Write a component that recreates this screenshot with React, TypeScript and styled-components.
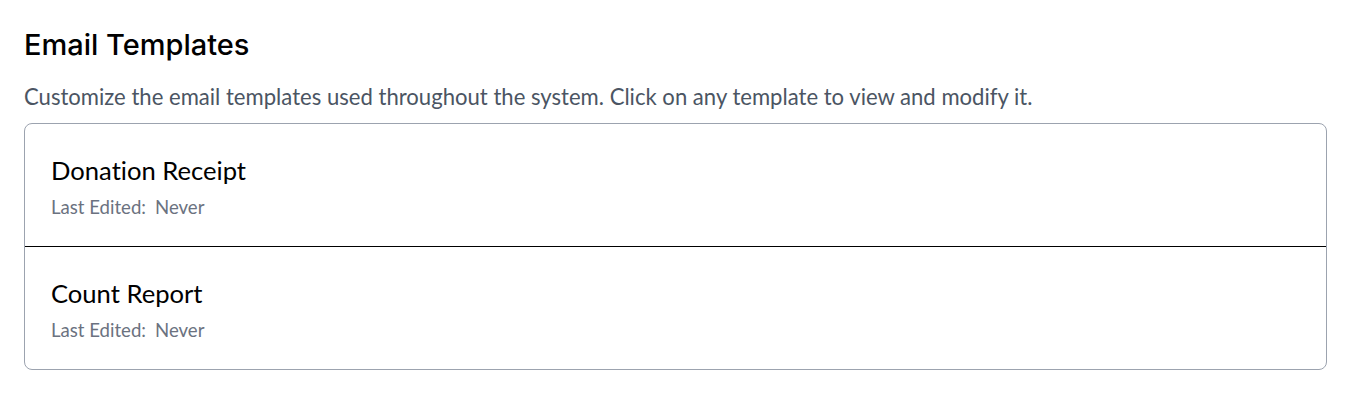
import styled, { createGlobalStyle } from 'styled-components';

const GlobalStyle = createGlobalStyle`
  body {
    margin: 0;
    background: #ffffff;
    font-family: Lato, "Liberation Sans", sans-serif;
    font-variant-ligatures: none;
  }
`;

const Page = styled.div`
  padding: 26px 31px 24px 24px;
  display: flex;
  flex-direction: column;
`;

const Heading = styled.h2`
  margin: 0;
  font-family: Inter, "Liberation Sans", sans-serif;
  font-size: 29px;
  font-weight: 500;
  line-height: 38px;
  color: #000000;
`;

const Description = styled.p`
  margin: 18px 0 0 0;
  font-size: 22.1px;
  line-height: 30px;
  color: #4b5563;
`;

const Card = styled.div`
  margin-top: 11px;
  border: 1px solid #9ca3af;
  border-radius: 8px;
  display: flex;
  flex-direction: column;
`;

const Row = styled.div<{ $last?: boolean }>`
  padding: 30px 26px 26px 26px;
  border-bottom: ${p => (p.$last ? 'none' : '1px solid #000000')};
  cursor: pointer;
`;

const Name = styled.div`
  font-size: 25.6px;
  line-height: 32px;
  color: #000000;
`;

const Meta = styled.div`
  margin-top: 8px;
  font-size: 18.6px;
  line-height: 26px;
  color: #6b7280;
  display: flex;
  gap: 9px;
`;

const templates = [
  { name: 'Donation Receipt', edited: 'Never' },
  { name: 'Count Report', edited: 'Never' },
];

function App() {
  return (
    <>
      <GlobalStyle />
      <Page>
        <Heading>Email Templates</Heading>
        <Description>
          Customize the email templates used throughout the system. Click on any template to view and modify it.
        </Description>
        <Card>
          {templates.map((t, i) => (
            <Row key={t.name} $last={i === templates.length - 1}>
              <Name>{t.name}</Name>
              <Meta>
                <span>Last Edited:</span>
                <span>{t.edited}</span>
              </Meta>
            </Row>
          ))}
        </Card>
      </Page>
    </>
  );
}

export default App;
